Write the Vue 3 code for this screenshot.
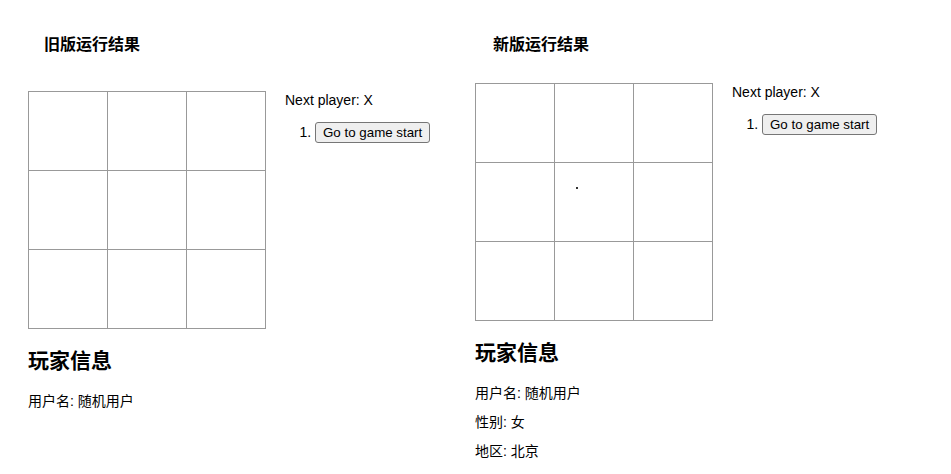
<script setup>
import { reactive } from 'vue'

const versions = reactive([
  {
    id: 'old',
    title: '旧版运行结果',
    squares: Array(9).fill(''),
    info: [{ label: '用户名', value: '随机用户' }],
  },
  {
    id: 'new',
    title: '新版运行结果',
    squares: Array(9).fill(''),
    speck: true,
    info: [
      { label: '用户名', value: '随机用户' },
      { label: '性别', value: '女' },
      { label: '地区', value: '北京' },
    ],
  },
])

function nextPlayer(version) {
  return version.squares.filter(Boolean).length % 2 ? 'O' : 'X'
}

function play(version, index) {
  if (!version.squares[index]) version.squares[index] = nextPlayer(version)
}

function restart(version) {
  version.squares.fill('')
}
</script>

<template>
  <main class="comparison">
    <section v-for="version in versions" :key="version.id" class="version" :class="version.id">
      <h3 class="title">{{ version.title }}</h3>
      <div class="game">
        <div class="board">
          <button
            v-for="(square, i) in version.squares"
            :key="i"
            class="square"
            type="button"
            :aria-label="`Square ${i + 1}`"
            @click="play(version, i)"
          >{{ square }}</button>
          <i v-if="version.speck" class="speck"></i>
        </div>
        <div class="game-info">
          <div>Next player: {{ nextPlayer(version) }}</div>
          <ol class="moves">
            <li><button class="move" type="button" @click="restart(version)">Go to game start</button></li>
          </ol>
        </div>
      </div>
      <h2 class="player">玩家信息</h2>
      <p v-for="row in version.info" :key="row.label" class="row">{{ row.label }}: {{ row.value }}</p>
    </section>
  </main>
</template>

<style>
body {
  margin: 0;
  background: #fff;
}
</style>

<style scoped>
.comparison {
  display: grid;
  grid-template-columns: 1fr 1fr;
  padding: 33px 29px 0 28px;
  color: #000;
  font: 14px/18px "Liberation Sans", "Noto Sans CJK SC", sans-serif;
}

.title {
  margin: 0 0 34px;
  padding-left: 16px;
  font-size: 16px;
  line-height: 24px;
}

.new .title {
  margin-bottom: 26px;
  padding-left: 18px;
}

.game {
  display: flex;
  gap: 19px;
}

.board {
  position: relative;
  display: grid;
  grid-template-columns: repeat(3, 79px);
  grid-auto-rows: 79px;
  border-top: 1px solid #999;
  border-left: 1px solid #999;
}

.square {
  padding: 0;
  border: 0 solid #999;
  border-width: 0 1px 1px 0;
  background: #fff;
  color: #000;
  font: bold 24px/34px "Liberation Sans", sans-serif;
}

.speck {
  position: absolute;
  top: 103px;
  left: 100px;
  width: 2px;
  height: 2px;
  background: #333;
}

.moves {
  margin: 0;
  padding: 13px 0 0 30px;
}

.move {
  padding: 1px 7px;
  border: 1px solid #767676;
  border-radius: 3px;
  background: #efefef;
  color: #000;
  font-family: "Liberation Sans", sans-serif;
  line-height: 17px;
}

.player {
  margin: 16px 0 15px;
  font-size: 21px;
  line-height: 32px;
}

.row {
  margin: 0 0 11px;
}
</style>
